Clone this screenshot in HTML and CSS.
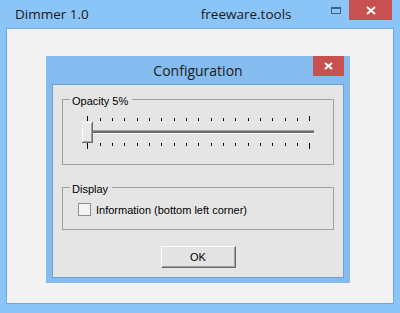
FILE: index.html
```html
<!DOCTYPE html>
<html lang="en">
<head>
    <meta charset="UTF-8">
    <title>Dimmer 1.0</title>
    <link rel="stylesheet" href="styles.css">
</head>
<body>
    <div class="window">
        <div class="titlebar">
            <span class="app-name">Dimmer 1.0</span>
            <span class="site">freeware.tools</span>
            <span class="max-btn"></span>
            <span class="close-btn">
                <svg width="10" height="9" viewBox="0 0 10 9"><path d="M1 1 L9 8 M9 1 L1 8" stroke="#fff" stroke-width="2"/></svg>
            </span>
        </div>
        <div class="client">
            <div class="dialog">
                <div class="dialog-title">
                    <span class="dialog-caption">Configuration</span>
                    <span class="dialog-close">
                        <svg width="9" height="8" viewBox="0 0 9 8"><path d="M1 1 L8 7 M8 1 L1 7" stroke="#fff" stroke-width="2"/></svg>
                    </span>
                </div>
                <div class="dialog-body">
                    <div class="group group-opacity">
                        <span class="legend">Opacity 5%</span>
                        <!-- trackbar: 19 ticks, thumb at the left -->
                        <svg class="slider" width="240" height="40" viewBox="0 0 240 40">
                            <g fill="#000">
                                <rect x="7" y="4" width="1" height="5"/>
                                <rect x="20" y="6" width="1" height="3"/>
                                <rect x="32" y="6" width="1" height="3"/>
                                <rect x="44" y="6" width="1" height="3"/>
                                <rect x="57" y="6" width="1" height="3"/>
                                <rect x="69" y="6" width="1" height="3"/>
                                <rect x="81" y="6" width="1" height="3"/>
                                <rect x="94" y="6" width="1" height="3"/>
                                <rect x="106" y="6" width="1" height="3"/>
                                <rect x="118" y="6" width="1" height="3"/>
                                <rect x="131" y="6" width="1" height="3"/>
                                <rect x="143" y="6" width="1" height="3"/>
                                <rect x="155" y="6" width="1" height="3"/>
                                <rect x="168" y="6" width="1" height="3"/>
                                <rect x="180" y="6" width="1" height="3"/>
                                <rect x="192" y="6" width="1" height="3"/>
                                <rect x="205" y="6" width="1" height="3"/>
                                <rect x="217" y="6" width="1" height="3"/>
                                <rect x="229" y="4" width="1" height="5"/>

                                <rect x="7" y="31" width="1" height="6"/>
                                <rect x="20" y="31" width="1" height="3"/>
                                <rect x="32" y="31" width="1" height="3"/>
                                <rect x="44" y="31" width="1" height="3"/>
                                <rect x="57" y="31" width="1" height="3"/>
                                <rect x="69" y="31" width="1" height="3"/>
                                <rect x="81" y="31" width="1" height="3"/>
                                <rect x="94" y="31" width="1" height="3"/>
                                <rect x="106" y="31" width="1" height="3"/>
                                <rect x="118" y="31" width="1" height="3"/>
                                <rect x="131" y="31" width="1" height="3"/>
                                <rect x="143" y="31" width="1" height="3"/>
                                <rect x="155" y="31" width="1" height="3"/>
                                <rect x="168" y="31" width="1" height="3"/>
                                <rect x="180" y="31" width="1" height="3"/>
                                <rect x="192" y="31" width="1" height="3"/>
                                <rect x="205" y="31" width="1" height="3"/>
                                <rect x="217" y="31" width="1" height="3"/>
                                <rect x="229" y="31" width="1" height="6"/>
                            </g>
                            <rect x="2" y="18" width="232" height="1" fill="#a0a0a0"/>
                            <rect x="2" y="19" width="232" height="2" fill="#6d6d6d"/>
                            <rect x="2" y="21" width="232" height="1" fill="#ffffff"/>
                            <!-- thumb -->
                            <rect x="2" y="10" width="11" height="21" fill="#696969"/>
                            <rect x="2" y="10" width="10" height="20" fill="#ffffff"/>
                            <rect x="3" y="11" width="9" height="19" fill="#a0a0a0"/>
                            <rect x="3" y="11" width="8" height="18" fill="#e8e8e8"/>
                        </svg>
                    </div>
                    <div class="group group-display">
                        <span class="legend">Display</span>
                        <label class="check"><span class="check-box"></span>Information (bottom left corner)</label>
                    </div>
                    <button type="button" class="ok">OK</button>
                </div>
            </div>
        </div>
    </div>
</body>
</html>
```

FILE: styles.css
```css
body {
    margin: 0;
    background-color: #8bc4f7;
    font-family: "Liberation Sans", Arial, sans-serif;
}

div.window {
    width: 400px;
    height: 313px;
    display: flex;
    flex-direction: column;
}

/* 바깥 창 제목줄 */
div.titlebar {
    height: 28px;
    display: flex;
    align-items: flex-start;
    font-family: "Open Sans", sans-serif;
    font-size: 13.5px;
    line-height: 18px;
    color: #1a1a1a;
}

div.titlebar span.app-name {
    margin: 5px 0 0 15px;
}

div.titlebar span.site {
    margin: 5px 0 0 112px;
}

div.titlebar span.max-btn {
    margin: 7px 0 0 auto;
    width: 10px;
    height: 7px;
    box-sizing: border-box;
    border: 1px solid #3f6388;
    border-top-width: 2px;
}

div.titlebar span.close-btn {
    margin: 0 8px 0 8px;
    width: 43px;
    height: 20px;
    background-color: #c75050;
    display: flex;
    align-items: center;
    justify-content: center;
}

div.client {
    flex: 1;
    margin: 0 6px 9px;
    border: 1px solid #74a9da;
    background-color: #f2f2f2;
}

/* 설정 대화상자 */
div.dialog {
    margin: 27px 0 0 39px;
    width: 304px;
    height: 227px;
    box-sizing: border-box;
    padding: 0 6px 5px;
    background-color: #85bcef;
    display: flex;
    flex-direction: column;
}

div.dialog-title {
    height: 28px;
    display: grid;
    grid-template-columns: 31px 1fr 31px;
}

div.dialog-title span.dialog-caption {
    grid-column: 2;
    text-align: center;
    font-family: "Open Sans", sans-serif;
    font-size: 14px;
    line-height: 20px;
    margin-top: 5px;
    color: #1a1a1a;
}

div.dialog-title span.dialog-close {
    grid-column: 3;
    height: 20px;
    background-color: #c75050;
    display: flex;
    align-items: center;
    justify-content: center;
}

div.dialog-body {
    flex: 1;
    border: 1px solid #6f9fd0;
    background-color: #e5e5e5;
    display: flex;
    flex-direction: column;
    align-items: flex-start;
    font-size: 11px;
    color: #000;
}

div.group {
    position: relative;
    margin-left: 9px;
    width: 272px;
    box-sizing: border-box;
    border: 1px solid #a0a0a0;
}

div.group span.legend {
    position: absolute;
    top: -5px;
    left: 7px;
    padding: 0 4px 0 2px;
    line-height: 13px;
    background-color: #e5e5e5;
}

div.group-opacity {
    margin-top: 14px;
    height: 66px;
}

div.group-opacity svg.slider {
    display: block;
    margin: 12px 0 0 17px;
}

div.group-display {
    margin-top: 22px;
    height: 43px;
}

label.check {
    display: flex;
    align-items: center;
    margin: 15px 0 0 15px;
}

label.check span.check-box {
    width: 13px;
    height: 13px;
    box-sizing: border-box;
    border: 1px solid #8e8f8f;
    background-color: #f4f4f4;
    margin-right: 5px;
}

button.ok {
    align-self: center;
    margin-top: 16px;
    width: 75px;
    height: 22px;
    padding: 0;
    font-family: "Liberation Sans", Arial, sans-serif;
    font-size: 11px;
    color: #000;
    background-color: #e3e3e3;
    border: 1px solid;
    border-color: #ffffff #696969 #696969 #ffffff;
    box-shadow: inset -1px -1px 0 #a0a0a0;
}
```
